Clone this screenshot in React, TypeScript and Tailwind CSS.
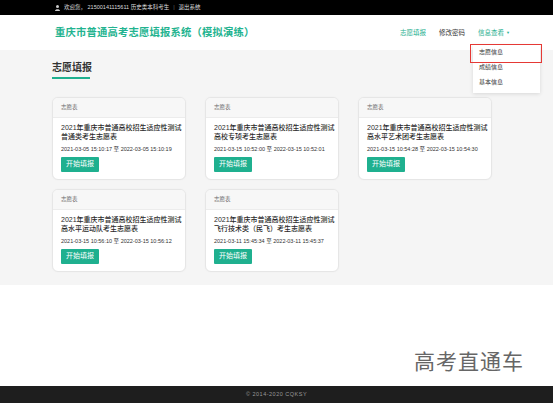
import React from 'react'

const cards = [
  { t1: '2021年重庆市普通高校招生适应性测试', t2: '普通类考生志愿表', d: '2021-03-05 15:10:17 至 2022-03-05 15:10:19' },
  { t1: '2021年重庆市普通高校招生适应性测试', t2: '高校专项考生志愿表', d: '2021-03-15 10:52:00 至 2022-03-15 10:52:01' },
  { t1: '2021年重庆市普通高校招生适应性测试', t2: '高水平艺术团考生志愿表', d: '2021-03-15 10:54:28 至 2022-03-15 10:54:30' },
  { t1: '2021年重庆市普通高校招生适应性测试', t2: '高水平运动队考生志愿表', d: '2021-03-15 10:56:10 至 2022-03-15 10:56:12' },
  { t1: '2021年重庆市普通高校招生适应性测试', t2: '飞行技术类（民飞）考生志愿表', d: '2021-03-11 15:45:34 至 2022-03-11 15:45:37' },
]

function Card({ t1, t2, d }: { t1: string; t2: string; d: string }) {
  return (
    <div className="w-[134px] h-[83px] rounded-[6px] border border-[#e6e6e6] bg-white overflow-hidden shadow-[0_0_2px_rgba(0,0,0,0.04)]">
      <div className="h-[20px] bg-[#f7f7f7] border-b border-[#ececec] px-[8px] flex items-center text-[5.5px] text-[#666]">志愿表</div>
      <div className="px-[8px] pt-[5px]">
        <div className="text-[7px] leading-[9.5px] font-medium text-[#2a2a2a] whitespace-nowrap">
          <div>{t1}</div>
          <div>{t2}</div>
        </div>
        <div className="mt-[4px] text-[5.5px] leading-[7px] text-[#333] whitespace-nowrap">{d}</div>
        <div className="mt-[4px] w-[38px] h-[15px] bg-[#1fb08f] rounded-[1px] flex items-center justify-center text-[7px] text-white">开始填报</div>
      </div>
    </div>
  )
}

export default function App() {
  return (
    <div className="relative w-[553px] h-[403px] flex flex-col bg-white overflow-hidden" style={{ fontFamily: '"Liberation Sans", "Noto Sans CJK SC", sans-serif' }}>
      {/* top bar */}
      <div className="h-[15px] bg-black flex items-center pl-[55px] text-[5.5px] text-[#ddd] gap-[4px]">
        <svg width="5" height="6" viewBox="0 0 10 12" fill="#ccc">
          <circle cx="5" cy="3" r="3" />
          <path d="M0 12 C0 7 10 7 10 12 Z" />
        </svg>
        <span>欢迎您，&nbsp;21500141115611 历史类本科考生</span>
        <span className="text-[#666]">|</span>
        <span>退出系统</span>
      </div>

      {/* header */}
      <div className="h-[35px] bg-white flex items-center justify-between pl-[55px] pr-[43px]">
        <div className="text-[10.3px] font-bold text-[#22b38f] tracking-[0.2px]">重庆市普通高考志愿填报系统（模拟演练）</div>
        <div className="flex items-center gap-[13px] text-[6.5px]">
          <span className="text-[#1fb08f]">志愿填报</span>
          <span className="text-[#333]">修改密码</span>
          <span className="text-[#1fb08f] flex items-center gap-[2px]">
            信息查看<span className="text-[4px]">▼</span>
          </span>
        </div>
      </div>

      {/* main */}
      <div className="h-[235px] bg-[#f5f5f5] pl-[52px] pt-[12px]">
        <div className="w-fit">
          <div className="text-[10px] font-bold text-[#333] leading-[12px]">志愿填报</div>
          <div className="mt-[3px] h-[1.5px] w-[38px] bg-[#1fb08f]" />
        </div>
        <div className="mt-[18px] grid grid-cols-[134px_134px_134px] gap-x-[19px] gap-y-[9px]">
          {cards.map((c, i) => (
            <Card key={i} {...c} />
          ))}
        </div>
      </div>

      {/* watermark area */}
      <div className="h-[101px] bg-white flex items-end justify-end pr-[29px] pb-[9px]">
        <span className="text-[21px] leading-[30px] text-[#666] tracking-[1px]">高考直通车</span>
      </div>

      {/* footer */}
      <div className="flex-1 bg-[#1e1e1e] flex items-center justify-center text-[5.5px] text-[#999] tracking-[0.5px]">
        © 2014-2020 CQKSY
      </div>

      {/* dropdown */}
      <div className="absolute left-[473px] top-[45px] w-[67px] bg-white shadow-[0_1px_4px_rgba(0,0,0,0.12)] text-[6px] text-[#333] pb-[3px]">
        <div className="h-[15px] flex items-center pl-[6px]">志愿信息</div>
        <div className="h-[15px] flex items-center pl-[6px]">成绩信息</div>
        <div className="h-[15px] flex items-center pl-[6px]">基本信息</div>
      </div>
      <div className="absolute left-[470px] top-[44px] w-[72px] h-[19px] border-[1.5px] border-[#e53935]" />
    </div>
  )
}
